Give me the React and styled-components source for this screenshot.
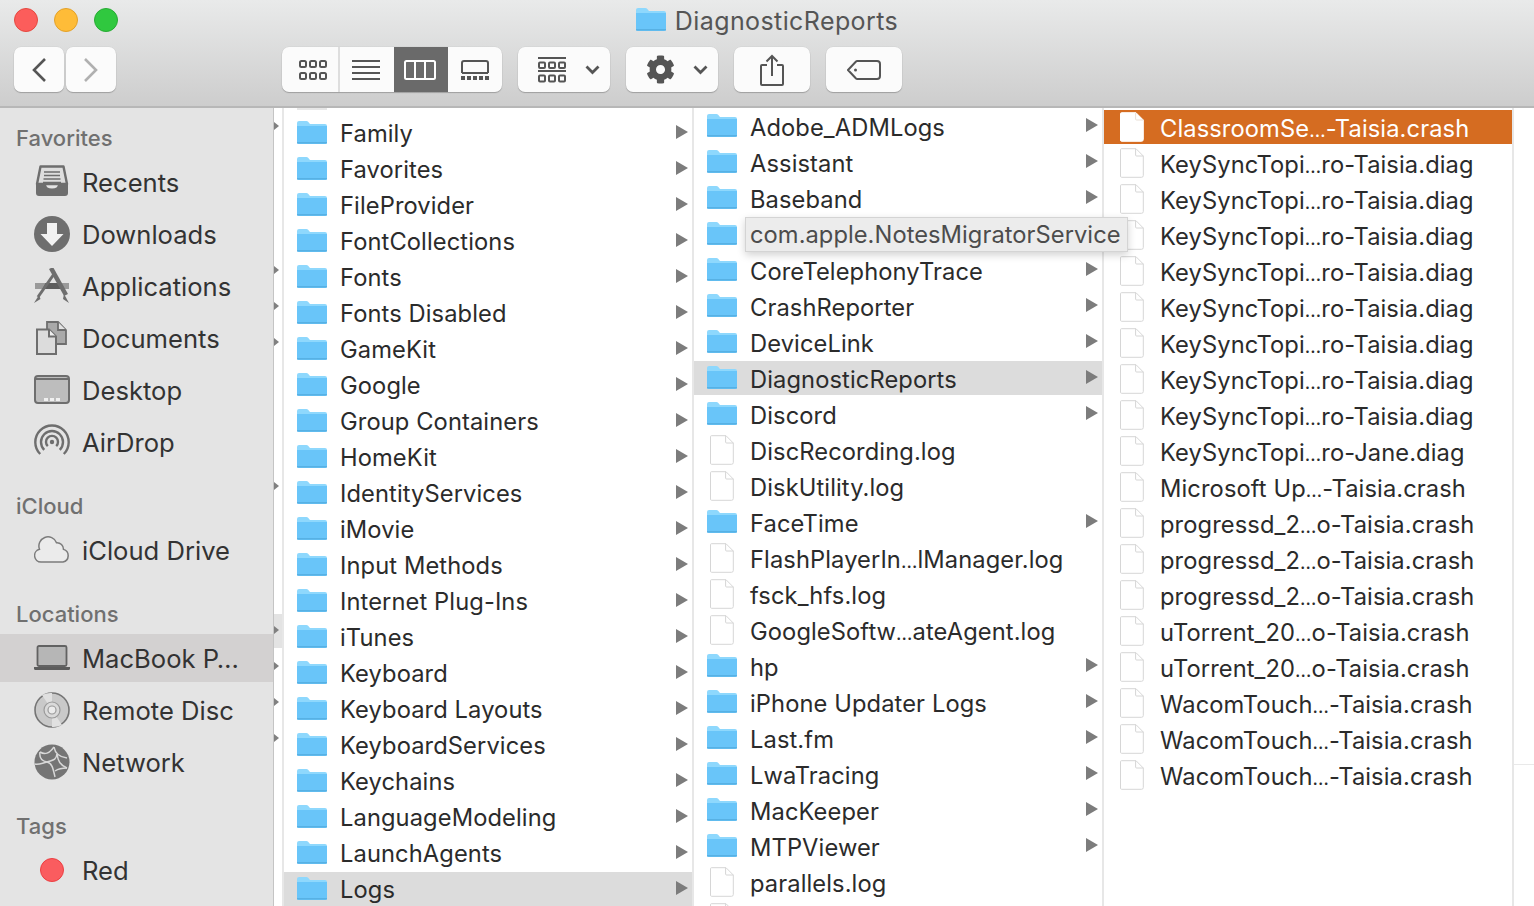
import React from 'react';
import styled, { createGlobalStyle } from 'styled-components';
import { FaCog } from 'react-icons/fa';

const Global = createGlobalStyle`
  html, body { margin: 0; padding: 0; height: 100%; overflow: hidden; background: #fff; }
  #root { height: 100%; }
  * { box-sizing: border-box; }
`;

const FONT = `Inter, "Liberation Sans", sans-serif`;

const Win = styled.div`
  position: relative; width: 1534px; height: 906px; overflow: hidden;
  display: flex; flex-direction: column; font-family: ${FONT}; color: #2b2b2b; background: #fff;
`;
const Toolbar = styled.header`
  flex: none; height: 108px; padding: 7px 0 0;
  background: linear-gradient(#e9eaea, #cdcdcd);
  border-bottom: 2px solid #b7b7b7;
`;
const TitleRow = styled.div`
  display: grid; grid-template-columns: 1fr auto 1fr; grid-template-rows: 26px; align-items: center; height: 26px; padding: 0 14px;
`;
const Lights = styled.div` display: flex; gap: 16px; `;
const Light = styled.span`
  width: 24px; height: 24px; border-radius: 50%;
  background: ${p => p.$c}; border: 1px solid ${p => p.$b};
`;
const Title = styled.div`
  display: flex; align-items: center; gap: 9px; height: 26px; line-height: 26px; font-size: 25px; color: #555; letter-spacing: 0.4px;
`;
const TitleText = styled.span` margin-top: 2px; `;
const Tools = styled.div`
  display: flex; align-items: flex-start; padding: 14px 0 0 14px;
`;
const Btn = styled.button`
  width: ${p => p.$w}px; height: 45px; margin: 0 0 0 ${p => p.$ml || 0}px; padding: 0 0 0 ${p => p.$pl || 0}px;
  display: flex; align-items: center; justify-content: ${p => p.$pl ? 'flex-start' : 'center'}; gap: ${p => p.$gap || 0}px;
  background: #fbfbfb; border: 0; border-radius: 7px;
  box-shadow: 0 1px 1px rgba(0,0,0,.22), 0 0 0 0.5px rgba(0,0,0,.05);
  color: #555;
`;
const Seg = styled.div`
  display: flex; height: 45px; margin-left: ${p => p.$ml}px; border-radius: 7px; overflow: hidden;
  background: #fbfbfb; box-shadow: 0 1px 1px rgba(0,0,0,.22), 0 0 0 0.5px rgba(0,0,0,.05);
`;
const SegCell = styled.div`
  width: ${p => p.$w}px; display: flex; align-items: center; justify-content: center;
  padding: 0 ${p => p.$pr || 0}px 0 ${p => p.$pl || 0}px;
  background: ${p => p.$on ? '#6a6a6a' : 'transparent'};
  border-right: ${p => p.$sep ? '2px solid #dedede' : '0'};
`;
const Body = styled.div` flex: 1; display: flex; min-height: 0; `;
const Sidebar = styled.aside`
  flex: none; width: 274px; padding-top: 11px; background: #e4e4e4; border-right: 1.5px solid #c4c4c4;
  display: flex; flex-direction: column; gap: 21px; overflow: hidden;
`;
const Section = styled.section``;
const Heading = styled.h3`
  margin: 0 0 0 16px; height: 38px; line-height: 38px; font-size: 22px; font-weight: 500; color: #707070;
`;
const SideList = styled.div` display: flex; flex-direction: column; gap: 4px; margin-top: 1px; `;
const SideItem = styled.div`
  height: 48px; display: flex; align-items: center; gap: 12px; padding-left: 34px;
  font-size: 25.6px; color: #333; background: ${p => p.$on ? '#d3d1d1' : 'transparent'};
`;
const Col = styled.div`
  flex: none; width: ${p => p.$w}px; padding-top: ${p => p.$top || 0}px; overflow: hidden;
  border-right: 2px solid #e7e7e7; background: #fff;
`;
const LastCol = styled.div`
  flex: 1; padding-top: 656px; background: #fff;
`;
const LastRule = styled.div` height: 1px; background: #e9e9e9; `;
const TinyRow = styled.div`
  height: 34px; margin-bottom: 2px; display: flex; align-items: center;
  background: ${p => p.$on ? '#e3e3e3' : 'transparent'};
`;
const Tiny = styled.span`
  width: 0; height: 0; border-style: solid; border-width: 4px 0 4px 5px; margin-top: -2px;
  border-color: transparent transparent transparent #808080;
`;
const Sliver = styled.div`
  width: 30px; height: 2px; margin: 0 0 6px 13px; background: #e7e7e7;
`;
const Row = styled.div`
  height: 34px; margin-bottom: 2px; display: flex; align-items: center; padding: 0 4px 0 13px;
  background: ${p => p.$sel === 'active' ? '#d56c21' : p.$sel === 'dim' ? '#dcdcdc' : 'transparent'};
  color: ${p => p.$sel === 'active' ? '#fff' : '#2b2b2b'};
`;
const IconSlot = styled.span`
  flex: none; width: 30px; height: 34px; display: flex; align-items: center; justify-content: center;
`;
const Name = styled.span`
  margin-left: 13px; font-size: 23.7px; letter-spacing: 0.1px; white-space: nowrap; flex: 1; margin-top: ${p => p.$mt}px;
`;
const Dots = styled.span` font-size: 0.8em; `;
const Arrow = styled.span`
  flex: none; width: 0; height: 0; border-style: solid; border-width: 7px 0 7px 12px; margin-top: -2px;
  border-color: transparent transparent transparent #7c7c7c;
`;
const Tip = styled.div`
  position: absolute; left: 745px; top: 217px; width: 383px; height: 35px; padding-left: 4px;
  display: flex; align-items: center;
  background: #ececec; border: 1px solid #d4d4d4; box-shadow: 0 3px 8px rgba(0,0,0,.18);
  font-size: 23.7px; letter-spacing: 0.05px; color: #4c4c4c; white-space: nowrap;
`;

const Folder = () => (
  <svg width="30" height="24" viewBox="0 0 30 24" style={{ marginBottom: 3 }}>
    <path d="M0 3a2 2 0 0 1 2-2h7.5a2 2 0 0 1 1.4.6L13 4h15a2 2 0 0 1 2 2v16a2 2 0 0 1-2 2H2a2 2 0 0 1-2-2z" fill="#8ed8fd" />
    <path d="M0 6h30v16a2 2 0 0 1-2 2H2a2 2 0 0 1-2-2z" fill="#69c5f9" />
    <path d="M0 22.8h30" stroke="#53acdf" strokeWidth="1.2" />
  </svg>
);
const FileIcon = ({ active }) => (
  <svg width="24" height="30" viewBox="0 0 24 30" style={{ marginBottom: 1 }}>
    <path d="M1.5.7H16L23.3 8v19.5a1.8 1.8 0 0 1-1.8 1.8h-20A1.2 1.2 0 0 1 .5 28V1.7A1 1 0 0 1 1.5.7z" fill="#fff" stroke={active ? '#fff' : '#d6d6d6'} />
    <path d="M15.6.7V7a1 1 0 0 0 1 1h6.7" fill="none" stroke={active ? '#eadfd6' : '#d6d6d6'} />
  </svg>
);
const Label = ({ text, mt = 2 }) => {
  const [a, b] = text.split('…');
  return <Name $mt={mt}>{b === undefined ? a : <>{a}<Dots>…</Dots>{b}</>}</Name>;
};
const D = '#6e6e6e';
const Ic = ({ children }) => <svg width="36" height="36" viewBox="0 0 36 36" style={{ flex: 'none' }}>{children}</svg>;
const side = {
  Recents: <Ic><path d="M6.5 2.5h23L33 20H3z" fill="#dedede" stroke={D} strokeWidth="2.4" strokeLinejoin="round" /><path d="M10 8h16M10 11.5h16M9.500 15h17M9 18.500h18" stroke={D} strokeWidth="1.4" /><path d="M2 20h10c0 3 2 4.500 6 4.500s6-1.500 6-4.500h10v9a3 3 0 0 1-3 3H5a3 3 0 0 1-3-3z" fill={D} /></Ic>,
  Downloads: <Ic><circle cx="18" cy="18" r="18" fill={D} /><path d="M13 7h10v11h6.500L18 30 6.500 18H13z" fill="#f2f2f2" /></Ic>,
  Applications: <Ic><path d="M1 15h34v6H1z" fill="#9a9a9a" /><path d="M11.500 15h13l3 6h-19z" fill="#5e5e5e" /><path d="M17 0L32 27" stroke={D} strokeWidth="4.500" /><path d="M30 26l5 9-6-4z" fill={D} /><path d="M20 6L4 29" stroke={D} strokeWidth="3" /><path d="M5 27L0 35l6.500-4z" fill={D} /></Ic>,
  Documents: <Ic><path d="M13 2h11l8 8v14H13z" fill="#a9a9a9" stroke={D} strokeWidth="1.800" /><path d="M24 2v8h8" fill="#e2e2e2" stroke={D} strokeWidth="1.800" /><path d="M3 9.500h12l7 7V34H3z" fill="#dcdcdc" stroke={D} strokeWidth="2" /><path d="M15 9.500v7h7" fill="#efefef" stroke={D} strokeWidth="2" /></Ic>,
  Desktop: <Ic><rect x="1" y="4" width="34" height="27" rx="3" fill="#bdbdbd" stroke={D} strokeWidth="2" /><path d="M1 7h34" stroke={D} strokeWidth="2" /><path d="M10 26h4v3h-4zM16 26h4v3h-4zM22 26h4v3h-4z" fill="#f0f0f0" /></Ic>,
  AirDrop: <Ic><g fill="none" stroke={D} strokeWidth="2.400"><path d="M6.200 30A16.700 16.700 0 1 1 29.800 30" /><path d="M10.200 25.800a11 11 0 1 1 15.600 0" /><path d="M13.800 22.200a6 6 0 1 1 8.400 0" /></g><circle cx="18" cy="18" r="2.200" fill={D} /></Ic>,
  'iCloud Drive': <Ic><path d="M7 30a6.500 6.500 0 0 1-1.500-12.800 9 9 0 0 1 17-6.500 6.500 6.500 0 0 1 7 6.700A6.500 6.500 0 0 1 29 30z" fill="#ebebeb" stroke="#7b7b7b" strokeWidth="1.500" /></Ic>,
  'MacBook P…': <Ic><rect x="3.500" y="6" width="29" height="20" rx="1.500" fill="#b6b6b6" stroke="#626262" strokeWidth="1.800" /><path d="M0 27h36v1.500a1.500 1.500 0 0 1-1.500 1.500h-33A1.500 1.500 0 0 1 0 28.500z" fill="#5c5c5c" /></Ic>,
  'Remote Disc': <Ic><circle cx="18" cy="18" r="17" fill="#c9c9c9" stroke="#757575" strokeWidth="1.600" /><path d="M18 18L8 3a18 18 0 0 1 10-2zM18 18l10 15a18 18 0 0 1-10 2z" fill="#e0e0e0" /><circle cx="18" cy="18" r="8" fill="#dadada" stroke="#9a9a9a" strokeWidth="1.200" /><circle cx="18" cy="18" r="4" fill="#ececec" stroke="#9a9a9a" strokeWidth="1.200" /></Ic>,
  Network: <Ic><circle cx="18" cy="18" r="17.500" fill="#757575" /><g fill="none" stroke="#d8d8d8" strokeWidth="1.500"><path d="M6 8c5 3 9 2 14-5" /><path d="M20 3c1 6 4 10 13 11" /><path d="M6 8c-1 6 2 9 7 10s6 6 8 15" /><path d="M13 18c5-2 9-1 10-8" /><path d="M23 10c1 7 3 11 10 14" /><path d="M21 27c3-2 7-3 12-3" /><path d="M1 20c4 1 7-1 12-2" /></g></Ic>,
  Red: <Ic><circle cx="18" cy="18" r="11.500" fill="#fa5c5f" stroke="#ec3f42" strokeWidth="1" /></Ic>,
};

const groups = [
  ['Favorites', ['Recents', 'Downloads', 'Applications', 'Documents', 'Desktop', 'AirDrop']],
  ['iCloud', ['iCloud Drive']],
  ['Locations', ['MacBook P…', 'Remote Disc', 'Network']],
  ['Tags', ['Red']],
];

const col1 = ['Family','Favorites','FileProvider','FontCollections','Fonts','Fonts Disabled','GameKit','Google','Group Containers','HomeKit','IdentityServices','iMovie','Input Methods','Internet Plug-Ins','iTunes','Keyboard','Keyboard Layouts','KeyboardServices','Keychains','LanguageModeling','LaunchAgents','Logs'];
const col2 = [
  ['Adobe_ADMLogs',1],['Assistant',1],['Baseband',1],['',1],['CoreTelephonyTrace',1],['CrashReporter',1],['DeviceLink',1],['DiagnosticReports',1],['Discord',1],
  ['DiscRecording.log',0],['DiskUtility.log',0],['FaceTime',1],['FlashPlayerIn…lManager.log',0],['fsck_hfs.log',0],['GoogleSoftw…ateAgent.log',0],['hp',1],['iPhone Updater Logs',1],['Last.fm',1],['LwaTracing',1],['MacKeeper',1],['MTPViewer',1],['parallels.log',0],['',0],
];
const kst = 'KeySyncTopi…ro-Taisia.diag';
const col3 = ['ClassroomSe…-Taisia.crash',kst,kst,kst,kst,kst,kst,kst,kst,'KeySyncTopi…ro-Jane.diag','Microsoft Up…-Taisia.crash','progressd_2…o-Taisia.crash','progressd_2…o-Taisia.crash','progressd_2…o-Taisia.crash','uTorrent_20…o-Taisia.crash','uTorrent_20…o-Taisia.crash','WacomTouch…-Taisia.crash','WacomTouch…-Taisia.crash','WacomTouch…-Taisia.crash'];
const tiny = new Set([0,4,5,6,10,14,15,16,17]);

const I = { fill: 'none', stroke: '#555', strokeWidth: 2 };
export default function App() {
  return (
    <Win>
      <Global />
      <Toolbar>
        <TitleRow>
          <Lights>
            <Light $c="#fc5d5b" $b="#e5483f" />
            <Light $c="#febc38" $b="#e3a129" />
            <Light $c="#30c83f" $b="#27ab34" />
          </Lights>
          <Title><Folder /><TitleText>DiagnosticReports</TitleText></Title>
          <span />
        </TitleRow>
        <Tools>
          <Btn $w={50} aria-label="Back"><svg width="16" height="26" viewBox="0 0 16 26"><path d="M14 2L3 13l11 11" fill="none" stroke="#555" strokeWidth="2.600" /></svg></Btn>
          <Btn $w={50} $ml={2} aria-label="Forward"><svg width="16" height="26" viewBox="0 0 16 26"><path d="M2 2l11 11L2 24" fill="none" stroke="#b0b0b0" strokeWidth="2.600" /></svg></Btn>
          <Seg $ml={166}>
            <SegCell $w={58} $pl={5} $sep><svg width="28" height="20" viewBox="0 0 28 20"><g {...I}>{[1,11,21].map(x => [1,13].map(y => <rect key={x+'-'+y} x={x} y={y} width="6" height="6" rx="1.500" />))}</g></svg></SegCell>
            <SegCell $w={54} $pr={2}><svg width="28" height="20" viewBox="0 0 28 20"><path d="M0 1h28M0 7h28M0 13h28M0 19h28" {...I} /></svg></SegCell>
            <SegCell $w={54} $pr={2} $on><svg width="32" height="20" viewBox="0 0 32 20"><rect x="1" y="1" width="30" height="18" rx="1.500" fill="none" stroke="#fff" strokeWidth="2" /><path d="M11 1v18M21 1v18" stroke="#fff" strokeWidth="2" /></svg></SegCell>
            <SegCell $w={54}><svg width="28" height="20" viewBox="0 0 28 20"><path d="M1 13V3a2 2 0 0 1 2-2h22a2 2 0 0 1 2 2v10" {...I} /><path d="M1 13h26" {...I} /><path d="M0 16h4v4H0zM6 16h4v4H6zM12 16h4v4h-4zM18 16h4v4h-4zM24 16h4v4h-4z" fill="#555" /></svg></SegCell>
          </Seg>
          <Btn $w={92} $ml={16} $pl={20} $gap={19}>
            <svg width="28" height="26" viewBox="0 0 28 26"><path d="M0 1h28M0 14h28" {...I} /><g {...I}>{[1,11,21].map(x => <React.Fragment key={x}><rect x={x} y="5.500" width="6" height="5.500" rx="1" /><rect x={x} y="18.500" width="6" height="6" rx="1" /></React.Fragment>)}</g></svg>
            <svg width="15" height="10" viewBox="0 0 15 10"><path d="M1.500 1.500l6 6 6-6" fill="none" stroke="#555" strokeWidth="2.800" /></svg>
          </Btn>
          <Btn $w={92} $ml={16} $pl={20} $gap={18}>
            <FaCog size={29} color="#555" />
            <svg width="15" height="10" viewBox="0 0 15 10"><path d="M1.500 1.500l6 6 6-6" fill="none" stroke="#555" strokeWidth="2.800" /></svg>
          </Btn>
          <Btn $w={76} $ml={16}>
            <svg width="24" height="32" viewBox="0 0 24 32"><path d="M7 11H2a1 1 0 0 0-1 1v18a1 1 0 0 0 1 1h20a1 1 0 0 0 1-1V12a1 1 0 0 0-1-1h-5" {...I} /><path d="M12 22V2M6.500 7.500L12 2l5.500 5.500" {...I} /></svg>
          </Btn>
          <Btn $w={76} $ml={16}>
            <svg width="34" height="20" viewBox="0 0 34 20"><path d="M1 10l8-8.500A2 2 0 0 1 10.500 1H30a3 3 0 0 1 3 3v12a3 3 0 0 1-3 3H10.500a2 2 0 0 1-1.500-.5z" {...I} /><circle cx="8.500" cy="10" r="1.500" fill="#555" /></svg>
          </Btn>
        </Tools>
      </Toolbar>
      <Body>
        <Sidebar>
          {groups.map(([h, items]) => (
            <Section key={h}>
              <Heading>{h}</Heading>
              <SideList>
                {items.map(n => <SideItem key={n} $on={n === 'MacBook P…'}>{side[n]}{n}</SideItem>)}
              </SideList>
            </Section>
          ))}
        </Sidebar>
        <Col $w={10} $top={2}>
          {Array.from({ length: 22 }, (_, i) => (
            <TinyRow key={i} $on={i === 14}>{tiny.has(i) && <Tiny />}</TinyRow>
          ))}
        </Col>
        <Col $w={410}>
          <Sliver />
          {col1.map(n => (
            <Row key={n} $sel={n === 'Logs' ? 'dim' : undefined}>
              <IconSlot><Folder /></IconSlot><Label text={n} mt={1} /><Arrow />
            </Row>
          ))}
        </Col>
        <Col $w={410} $top={1}>
          {col2.map(([n, isDir], i) => (
            <Row key={i} $sel={n === 'DiagnosticReports' ? 'dim' : undefined}>
              <IconSlot>{isDir ? <Folder /> : <FileIcon />}</IconSlot><Label text={n} />{isDir ? <Arrow /> : null}
            </Row>
          ))}
        </Col>
        <Col $w={410} $top={2}>
          {col3.map((n, i) => (
            <Row key={i} $sel={i === 0 ? 'active' : undefined}>
              <IconSlot><FileIcon active={i === 0} /></IconSlot><Label text={n} />
            </Row>
          ))}
        </Col>
        <LastCol><LastRule /></LastCol>
      </Body>
      <Tip>com.apple.NotesMigratorService</Tip>
    </Win>
  );
}
